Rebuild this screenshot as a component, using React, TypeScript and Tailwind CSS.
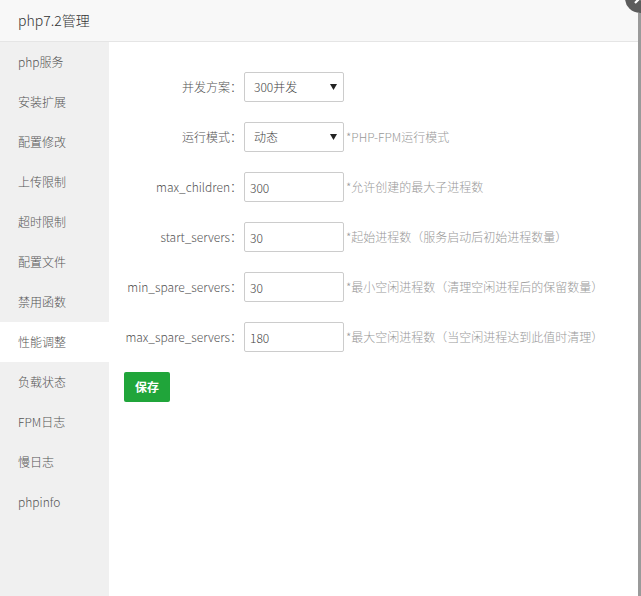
import React from 'react';

const menu = ['php服务', '安装扩展', '配置修改', '上传限制', '超时限制', '配置文件', '禁用函数', '性能调整', '负载状态', 'FPM日志', '慢日志', 'phpinfo'];

type Row = { label: string; value: string; hint?: string; select?: boolean };

const rows: Row[] = [
  { label: '并发方案：', value: '300并发', select: true },
  { label: '运行模式：', value: '动态', select: true, hint: '*PHP-FPM运行模式' },
  { label: 'max_children：', value: '300', hint: '*允许创建的最大子进程数' },
  { label: 'start_servers：', value: '30', hint: '*起始进程数（服务启动后初始进程数量）' },
  { label: 'min_spare_servers：', value: '30', hint: '*最小空闲进程数（清理空闲进程后的保留数量）' },
  { label: 'max_spare_servers：', value: '180', hint: '*最大空闲进程数（当空闲进程达到此值时清理）' },
];

function Field({ row }: { row: Row }) {
  if (row.select) {
    return (
      <div className="relative h-[30px] w-[100px]">
        <select
          defaultValue={row.value}
          className="h-full w-full appearance-none rounded-[2px] border border-[#ccc] bg-white pl-[9px] text-[12px] font-light text-[#444] outline-none"
        >
          <option>{row.value}</option>
        </select>
        <svg className="pointer-events-none absolute right-[7px] top-[12px]" width="7" height="6" viewBox="0 0 7 6">
          <path d="M0 0H7L3.5 6Z" fill="#222" />
        </svg>
      </div>
    );
  }
  return (
    <input
      defaultValue={row.value}
      className="h-[30px] w-[100px] rounded-[2px] border border-[#ccc] bg-white pl-[5px] text-[12px] font-light text-[#444] outline-none"
    />
  );
}

export default function App() {
  return (
    <div className="relative h-[596px] w-[641px] overflow-hidden bg-white font-['Noto_Sans_CJK_SC','Noto_Sans',sans-serif] font-light">
      <header className="flex h-[42px] items-center border-b border-[#e5e5e5] bg-[#f8f8f8] pl-[18px] text-[14px] text-[#333]">
        php7.2管理
      </header>

      <div className="flex h-[554px]">
        <nav className="w-[109px] shrink-0 bg-[#f0f0f0]">
          {menu.map((item) => (
            <div
              key={item}
              className={`flex h-[40px] items-center pl-[18px] text-[12px] text-[#555] ${item === '性能调整' ? 'bg-white' : ''}`}
            >
              {item}
            </div>
          ))}
        </nav>

        <main className="flex-1 pl-[15px] pt-[30px]">
          {rows.map((row) => (
            <div key={row.label} className="mb-[20px] flex h-[30px] items-center">
              <label className="w-[118px] text-right text-[12px] text-[#555]">{row.label}</label>
              <div className="ml-[2px]">
                <Field row={row} />
              </div>
              {row.hint && <span className="ml-[2px] text-[12px] text-[#999]">{row.hint}</span>}
            </div>
          ))}
          <button className="h-[30px] w-[46px] rounded-[2px] bg-[#20a53a] text-[12px] font-bold text-white">保存</button>
        </main>
      </div>

      {/* page edge behind the layer */}
      <div className="absolute bottom-0 right-0 top-[13px] w-[3px] bg-[#9a9a9a]" />

      {/* close button */}
      <div className="absolute left-[625px] top-[-17px] flex h-[30px] w-[30px] items-center justify-center rounded-full bg-[#5c5c5c]">
        <svg width="14" height="14" viewBox="0 0 14 14">
          <path d="M2 2L12 12M12 2L2 12" stroke="#fff" strokeWidth="2.2" />
        </svg>
      </div>
    </div>
  );
}
